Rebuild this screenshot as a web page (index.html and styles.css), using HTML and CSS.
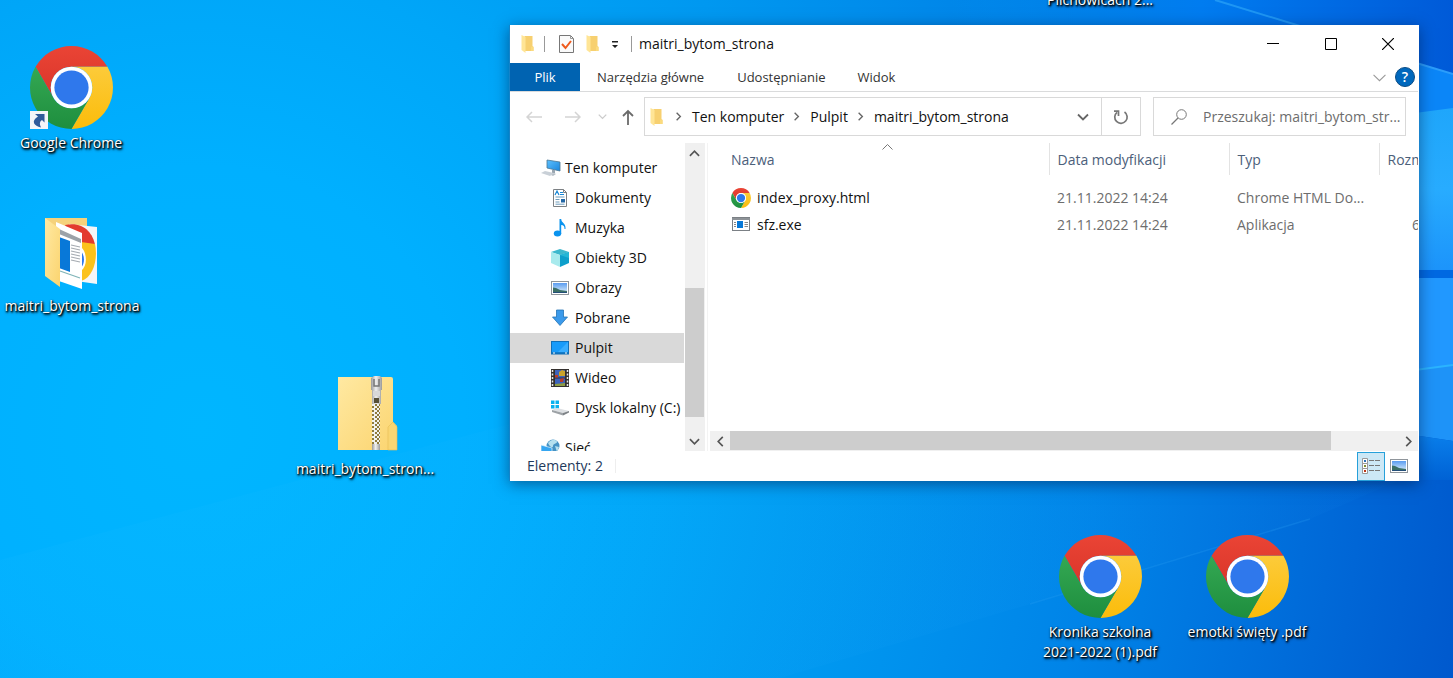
FILE: index.html
```html
<!DOCTYPE html>
<html lang="pl">
<head>
<meta charset="utf-8">
<title>Pulpit</title>
<link rel="stylesheet" href="styles.css">
</head>
<body>
<svg class="defs" width="0" height="0" aria-hidden="true">
  <defs>
    <linearGradient id="g-red" x1="0" y1="0" x2="0" y2="1"><stop offset="0" stop-color="#ea4435"/><stop offset="1" stop-color="#d9352a"/></linearGradient>
    <linearGradient id="g-yel" x1="0" y1="0" x2="0" y2="1"><stop offset="0" stop-color="#fccb3a"/><stop offset="1" stop-color="#fbbc0a"/></linearGradient>
    <linearGradient id="g-grn" x1="0" y1="0" x2="0" y2="1"><stop offset="0" stop-color="#34a853"/><stop offset="1" stop-color="#1e8e3e"/></linearGradient>
    <linearGradient id="g-fold" x1="0" y1="0" x2="1" y2="1"><stop offset="0" stop-color="#ffe9a2"/><stop offset="1" stop-color="#fbd46f"/></linearGradient>
    <linearGradient id="g-metal" x1="0" y1="0" x2="1" y2="0"><stop offset="0" stop-color="#999"/><stop offset=".45" stop-color="#f0f0f0"/><stop offset="1" stop-color="#9a9a9a"/></linearGradient>
    <linearGradient id="g-sky" x1="0" y1="0" x2="0" y2="1"><stop offset="0" stop-color="#5a9cf0"/><stop offset="1" stop-color="#dff0fb"/></linearGradient>
    <linearGradient id="g-screen" x1="0" y1="0" x2="1" y2="1"><stop offset="0" stop-color="#5cc0ff"/><stop offset="1" stop-color="#1b86dc"/></linearGradient>
    <pattern id="zip-teeth" width="8" height="4" patternUnits="userSpaceOnUse"><rect width="8" height="4" fill="#8e7a3c"/><path d="M0 0h3v2H0zM5 0h2v2H5zM2 2h3v2H2zM7 2h1v2H7z" fill="#f1f1ee"/></pattern>
    <symbol id="chrome" viewBox="0 0 48 48">
      <path fill="url(#g-red)" d="M3.22 12A24 24 0 0 1 44.78 12H24A12 12 0 0 0 13.61 30Z"/>
      <path fill="url(#g-yel)" d="M44.78 12A24 24 0 0 1 24 48L34.39 30A12 12 0 0 0 24 12Z"/>
      <path fill="url(#g-grn)" d="M24 48A24 24 0 0 1 3.22 12L13.61 30A12 12 0 0 0 34.39 30Z"/>
      <circle cx="24" cy="24" r="12" fill="#fff"/><circle cx="24" cy="24" r="9.9" fill="#2f78ec"/>
    </symbol>
    <symbol id="folder" viewBox="0 0 12 18">
      <path fill="#f7d070" d="M3 1h8v10l1 1v4H3z"/><path fill="#ffe596" d="M0 0l4 2v16l-4-3z"/><path fill="#fbdb7e" d="M9.500 16v-4l1.500-1 1 1v4z"/>
    </symbol>
    <symbol id="picture" viewBox="0 0 18 14">
      <rect x=".5" y=".5" width="17" height="13" fill="#fff" stroke="#8f959b"/><rect x="2" y="2" width="14" height="10" fill="url(#g-sky)"/>
      <path fill="#3b6f66" d="M2 6.500l3 .5 4 2 7 1v2H2z"/><path fill="#234e78" d="M2 11h14v1H2z"/>
    </symbol>
    <symbol id="chev-down" viewBox="0 0 12 12"><path d="M1 3.500l5 5 5-5" fill="none" stroke="currentColor" stroke-width="1.800"/></symbol>
    <symbol id="chev-up" viewBox="0 0 12 12"><path d="M1 8.500l5-5 5 5" fill="none" stroke="currentColor" stroke-width="1.800"/></symbol>
    <symbol id="chev-left" viewBox="0 0 12 12"><path d="M8.500 1l-5 5 5 5" fill="none" stroke="currentColor" stroke-width="1.800"/></symbol>
    <symbol id="chev-right" viewBox="0 0 12 12"><path d="M3.500 1l5 5-5 5" fill="none" stroke="currentColor" stroke-width="1.800"/></symbol>
  </defs>
</svg>

<main class="desktop">
  <svg class="wallpaper" viewBox="0 0 1453 678" preserveAspectRatio="none" aria-hidden="true">
    <defs>
      <radialGradient id="w-base" gradientUnits="userSpaceOnUse" cx="200" cy="430" r="1320">
        <stop offset="0" stop-color="#00b6ff"/><stop offset=".2" stop-color="#00b0ff"/><stop offset=".35" stop-color="#00a6f8"/><stop offset=".5" stop-color="#0098f0"/><stop offset=".68" stop-color="#0084e8"/><stop offset=".84" stop-color="#006cda"/><stop offset="1" stop-color="#0054ca"/>
      </radialGradient>
      <linearGradient id="w-top" gradientUnits="userSpaceOnUse" x1="950" y1="0" x2="1453" y2="0"><stop offset="0" stop-color="#0093f2" stop-opacity="0"/><stop offset=".5" stop-color="#007cf0"/><stop offset="1" stop-color="#005ad8"/></linearGradient>
      <linearGradient id="w-beam" x1="0" y1="0" x2="0" y2="1"><stop offset="0" stop-color="#1fa6fb"/><stop offset=".5" stop-color="#28acff"/><stop offset="1" stop-color="#1c94fb"/></linearGradient>
      <linearGradient id="w-low" x1="0" y1="0" x2="0" y2="1"><stop offset="0" stop-color="#0a80ec"/><stop offset="1" stop-color="#0062d5"/></linearGradient>
      <linearGradient id="w-ray" x1="0" y1="0" x2="1" y2="0"><stop offset="0" stop-color="#5cd0ff" stop-opacity=".1"/><stop offset="1" stop-color="#2ba4ff" stop-opacity=".1"/></linearGradient>
    </defs>
    <rect width="1453" height="678" fill="url(#w-base)"/>
    <path d="M900 0H1453V80L1290 30H900z" fill="url(#w-top)"/>
    <path d="M1215 0L1300 26" stroke="#2ba4f8" stroke-width="2" opacity=".7"/>
    <path d="M1400 58L1453 74V110L1400 116z" fill="#0b86f8"/>
    <path d="M1400 58L1453 74" stroke="#2b9dfb" stroke-width="2"/>
    <path d="M1400 115L1453 108V270H1400z" fill="url(#w-beam)"/>
    <path d="M1400 270H1453V278H1400z" fill="#0069e2"/>
    <path d="M1400 278H1453V366L1400 372z" fill="#2198ff"/>
    <path d="M1400 372L1453 365V441L1400 433z" fill="#1e93f8"/>
    <path d="M1400 372L1453 365" stroke="#2bb4ff" stroke-width="2"/>
    <path d="M1400 433L1453 441V480L1400 480z" fill="url(#w-low)"/>
    <path d="M0 560L600 400H1400V480L1310 519L1030 604L780 678H0z" fill="url(#w-ray)" opacity=".4"/>
    <path d="M1030 604L1310 519" stroke="#2aa0f5" stroke-width="1.500" fill="none" opacity=".25"/>
  </svg>

  <a class="shortcut at-chrome" href="#">
    <span class="art"><svg width="83" height="83"><use href="#chrome"/></svg>
      <svg class="link-badge" width="18" height="18" viewBox="0 0 18 18"><rect width="18" height="18" fill="#f3f5f8"/><path d="M5 3h9.500v8.500L12 9c-2.500 1.500-2.800 4-1 7.500C4 15 .5 10 8 5.500z" fill="#2f5b9b"/></svg></span>
    <span class="caption">Google Chrome</span>
  </a>
  <a class="shortcut at-folder" href="#">
    <span class="art"><svg width="83" height="83" viewBox="0 0 83 83">
      <path d="M14 9h42v58H14z" fill="#f5d27c"/>
      <path d="M38 15l28 3v57l-28-4z" fill="#f3f5f8"/>
      <path d="M34 16c18-4 28 8 30 20l-5 0-15-3z" fill="#e33b2e"/>
      <path d="M50 33l14 2c3 14-1 33-14 37z" fill="#fbc21c"/>
      <path d="M50 38c6 5 7 19 0 24z" fill="#fff"/><path d="M50 42c4 5 4 12 0 17z" fill="#2f78ec"/>
      <path d="M25 13l26 11v56l-26-9z" fill="#fff"/><path d="M28 20l22 10v4l-22-9z" fill="#9ca2a8"/>
      <path d="M28 28l11 4v31l-11-4z" fill="#0878d8"/>
      <path d="M40 36l9 2M40 39l9 2M40 42l9 2M40 45l9 2M40 48l9 2M40 51l9 2" stroke="#a5abb1" stroke-width="1.200"/>
      <path d="M29 62l20 7" stroke="#7fb4b8" stroke-width="1.200"/>
      <path d="M14 9l15 11v58L14 67z" fill="url(#g-fold)"/>
    </svg></span>
    <span class="caption">maitri_bytom_strona</span>
  </a>
  <a class="shortcut at-zip" href="#">
    <span class="art"><svg width="83" height="83" viewBox="0 0 83 83">
      <path d="M14 5h53q2 0 2 2v43l4 4v24H14z" fill="url(#g-fold)"/><path d="M64 78V55l5-5 4 5v23z" fill="#f9d673" stroke="#e6bd55" stroke-width=".6"/>
      <rect x="48" y="32" width="8" height="40" fill="url(#zip-teeth)"/>
      <path d="M48 72h8v6h-8z" fill="url(#g-metal)"/>
      <path d="M47 6l3-2h6l2 2v12h-1v14h-9V18h-1z" fill="url(#g-metal)"/><path d="M50 7v7h5V7" fill="none" stroke="#777" stroke-width="1.500"/><rect x="50" y="26" width="5" height="5" fill="#564f37"/><path d="M49 19h7v5h-7z" fill="#d8d8d8"/>
    </svg></span>
    <span class="caption">maitri_bytom_stron...</span>
  </a>
  <a class="shortcut at-kronika" href="#">
    <span class="art"><svg width="83" height="83"><use href="#chrome"/></svg></span>
    <span class="caption">Kronika szkolna<br>2021-2022 (1).pdf</span>
  </a>
  <a class="shortcut at-emotki" href="#">
    <span class="art"><svg width="83" height="83"><use href="#chrome"/></svg></span>
    <span class="caption">emotki święty .pdf</span>
  </a>
  <a class="shortcut at-top" href="#"><span class="caption">Pilchowicach 2...</span></a>

  <section class="window" aria-label="maitri_bytom_strona">
    <header class="titlebar">
      <svg width="13" height="18"><use href="#folder"/></svg>
      <span class="rule first"></span>
      <button class="plain" aria-label="Właściwości"><svg width="15" height="18" viewBox="0 0 15 18"><path d="M.5.500h11l3 3v14H.5z" fill="#fafafa" stroke="#777"/><path d="M11.500.500v3h3" fill="none" stroke="#999"/><path d="M3 9l3.500 4L12 6" fill="none" stroke="#ee5a1c" stroke-width="2"/></svg></button>
      <button class="plain" aria-label="Nowy folder"><svg width="13" height="18"><use href="#folder"/></svg></button>
      <button class="plain" aria-label="Dostosuj"><svg width="8" height="10" viewBox="0 0 8 10"><path d="M1 2h6v1.500H1zM1 6h6L4 9z" fill="#222"/></svg></button>
      <span class="rule last"></span>
      <h1 class="title">maitri_bytom_strona</h1>
      <button class="control" aria-label="Minimalizuj"><svg width="12" height="12"><path d="M0 5.500h12" stroke="#000"/></svg></button>
      <button class="control" aria-label="Maksymalizuj"><svg width="12" height="12"><path d="M.5.500h11v11H.5z" fill="none" stroke="#000"/></svg></button>
      <button class="control" aria-label="Zamknij"><svg width="12" height="12"><path d="M0 0l12 12M12 0L0 12" stroke="#000" stroke-width="1.200"/></svg></button>
    </header>

    <nav class="tabs">
      <button class="tab file">Plik</button>
      <button class="tab">Narzędzia główne</button>
      <button class="tab">Udostępnianie</button>
      <button class="tab">Widok</button>
      <button class="plain expand" aria-label="Rozwiń wstążkę"><svg width="13" height="13" viewBox="0 0 12 12"><path d="M.5 3.500L6 9l5.500-5.500" fill="none" stroke="#999"/></svg></button>
      <button class="help" aria-label="Pomoc">?</button>
    </nav>

    <div class="toolbar">
      <button class="plain" aria-label="Wstecz"><svg width="16" height="12"><path d="M16 6H1M6 1L1 6l5 5" fill="none" stroke="#d4d4d4" stroke-width="1.500"/></svg></button>
      <button class="plain" aria-label="Dalej"><svg width="16" height="12"><path d="M0 6h15M10 1l5 5-5 5" fill="none" stroke="#d4d4d4" stroke-width="1.500"/></svg></button>
      <button class="plain recent" aria-label="Ostatnie"><svg width="9" height="9"><use href="#chev-down"/></svg></button>
      <button class="plain up" aria-label="W górę"><svg width="12" height="16"><path d="M6 16V2M1 7l5-5 5 5" fill="none" stroke="#6b6b6b" stroke-width="1.800"/></svg></button>
      <div class="address">
        <svg class="address-icon" width="13" height="18"><use href="#folder"/></svg>
        <svg class="sep" width="9" height="9"><use href="#chev-right"/></svg>
        <button class="plain crumb">Ten komputer</button>
        <svg class="sep" width="9" height="9"><use href="#chev-right"/></svg>
        <button class="plain crumb">Pulpit</button>
        <svg class="sep" width="9" height="9"><use href="#chev-right"/></svg>
        <button class="plain crumb">maitri_bytom_strona</button>
        <button class="plain drop" aria-label="Poprzednie lokalizacje"><svg width="12" height="12"><use href="#chev-down"/></svg></button>
        <button class="plain refresh" aria-label="Odśwież"><svg width="16" height="16" viewBox="0 0 16 16"><path d="M11.500 3A6.200 6.200 0 1 1 4 3.300M1 2.200h4.500V7" fill="none" stroke="#777" stroke-width="1.700"/></svg></button>
      </div>
      <label class="search">
        <svg width="16" height="16" viewBox="0 0 16 16"><circle cx="10.500" cy="5.500" r="4.800" fill="none" stroke="#777"/><path d="M7 9l-6.500 6.500" stroke="#777" stroke-width="1.200"/></svg>
        <input type="text" aria-label="Przeszukaj" placeholder="Przeszukaj: maitri_bytom_str...">
      </label>
    </div>

    <div class="body">
      <nav class="tree">
        <a class="node root" href="#"><svg width="20" height="18" viewBox="0 0 20 18"><path d="M6 1l13 2v9L6 9z" fill="url(#g-screen)" stroke="#4a7590" stroke-width=".8"/><path d="M11 11h3v3h-3z" fill="#9aa6b0"/><path d="M0 14l4-2 9 2-4 3z" fill="#c9d0d7"/><path d="M10 16l3-2 2 1-3 2z" fill="#b5bec6"/></svg>Ten komputer</a>
        <a class="node" href="#"><svg width="18" height="18" viewBox="0 0 18 18"><path d="M2.500.500h10l3 3v14h-13z" fill="#fff" stroke="#7c8083"/><path d="M12.500.500v3h3" fill="none" stroke="#7c8083"/><path d="M4 6l2-4 2 4M9 3.500h3M9 5.500h4" fill="none" stroke="#1787d6" stroke-width="1.200"/><path d="M4.500 8h9M4.500 10.500h4M4.500 13h4M4.500 15.200h9" stroke="#6d9cbb"/><rect x="10" y="10" width="4" height="3.500" fill="#2267a5"/></svg>Dokumenty</a>
        <a class="node" href="#"><svg width="18" height="18" viewBox="0 0 18 18"><ellipse cx="6.500" cy="14.500" rx="3.700" ry="3" fill="#0a93ee"/><path d="M8.500 0h1.700c0 4 5 4 4.300 10h-1c0-3-1-4-3.300-4v9H8.500z" fill="#0a93ee"/></svg>Muzyka</a>
        <a class="node" href="#"><svg width="18" height="18" viewBox="0 0 18 18"><path d="M0 3l9-3 9 3-9 3z" fill="#3db8cd"/><path d="M0 3l9 3v12l-9-4z" fill="#a8eaed"/><path d="M18 3L9 6v12l9-4z" fill="#0e9fcb"/><path d="M9 6l9-3v6z" fill="#25b6d5"/></svg>Obiekty 3D</a>
        <a class="node" href="#"><svg width="18" height="14"><use href="#picture"/></svg>Obrazy</a>
        <a class="node" href="#"><svg width="18" height="18" viewBox="0 0 18 18"><path d="M5.500 1h7v7h4L9 16.500 1.500 8h4z" fill="#3b9aeb" stroke="#2374b5" stroke-width=".8"/></svg>Pobrane</a>
        <a class="node selected" href="#" aria-current="true"><svg width="18" height="14" viewBox="0 0 18 14"><rect x=".5" y=".5" width="17" height="12.500" fill="#189bfa" stroke="#1270b8"/><path d="M17 1v10H7z" fill="#38adff"/><path d="M1 12h16" stroke="#0b5d9e"/><path d="M2 12h2M14 12h2" stroke="#fff"/></svg>Pulpit</a>
        <a class="node" href="#"><svg width="18" height="18" viewBox="0 0 18 18"><path d="M0 0h18v18H0z" fill="#33302e"/><path d="M1.500 1v17M16.500 1v17" stroke="#e8e8e8" stroke-width="1.500" stroke-dasharray="2 1.500"/><path d="M4 1h10v7.500H4zM4 9.500h10V17H4z" fill="#3c63bb"/><path d="M8 3l3-2 3 1v5H8z" fill="#c9a32b"/><path d="M4 6h3v2.500H4zM9 10l4-1-1 4H9z" fill="#bd3a26"/><path d="M4 15l10-1v3H4z" fill="#8d9c44"/></svg>Wideo</a>
        <a class="node" href="#"><svg width="18" height="18" viewBox="0 0 18 18"><path d="M0 1.500h3.500V5H0zM4.500 1.500H8V5H4.500zM0 6h3.500v3.500H0zM4.500 6H8v3.500H4.500z" fill="#09b2ef"/><path d="M1 11l5-2 12 3-6 2z" fill="#dde0e3"/><path d="M1 11l11 3v2.500L1 13z" fill="#9da2a6"/><path d="M18 12l-6 2v2.500l6-3z" fill="#7d8286"/></svg>Dysk lokalny (C:)</a>
        <a class="node root network" href="#"><svg width="20" height="18" viewBox="0 0 20 18"><circle cx="12" cy="7" r="6.500" fill="#4592c4"/><path d="M7 4c4-5 9-3 9-1s-4 1-4 4-4 0-5-3zM14 7l4 1-2 5z" fill="#b5e0ef"/><path d="M0 6l11 3v9L0 15z" fill="#35a6f1" stroke="#e7f5fc" stroke-width=".7"/></svg>Sieć</a>
      </nav>
      <div class="vscroll">
        <button class="plain arrow" aria-label="Przewiń w górę"><svg width="11" height="11"><use href="#chev-up"/></svg></button>
        <div class="track"><div class="thumb"></div></div>
        <button class="plain arrow" aria-label="Przewiń w dół"><svg width="11" height="11"><use href="#chev-down"/></svg></button>
      </div>
      <div class="content">
        <div class="listing">
          <table class="files">
            <colgroup><col class="c-name"><col class="c-date"><col class="c-type"><col class="c-size"></colgroup>
            <thead><tr><th>Nazwa<svg class="sorted" width="11" height="6"><path d="M.5 5.500l5-5 5 5" fill="none" stroke="#777"/></svg></th><th>Data modyfikacji</th><th>Typ</th><th>Rozmiar</th></tr></thead>
            <tbody>
              <tr><td><span class="entry"><svg width="20" height="20"><use href="#chrome"/></svg>index_proxy.html</span></td><td>21.11.2022 14:24</td><td>Chrome HTML Do...</td><td></td></tr>
              <tr><td><span class="entry"><svg width="20" height="20" viewBox="0 0 20 20"><rect x="1.500" y="2.500" width="17" height="13" fill="#fff" stroke="#7b8085"/><path d="M1 4h18" stroke="#8d9297" stroke-width="2"/><rect x="6" y="6" width="6" height="7" fill="#0878d7"/><path d="M3 7.500h2M3 9.500h2M3 11.500h2M13.500 7.500H17M13.500 9.500H17M13.500 11.500H17" stroke="#888"/></svg>sfz.exe</span></td><td>21.11.2022 14:24</td><td>Aplikacja</td><td class="size">6 KB</td></tr>
            </tbody>
          </table>
        </div>
        <div class="hscroll">
          <button class="plain arrow" aria-label="Przewiń w lewo"><svg width="11" height="11"><use href="#chev-left"/></svg></button>
          <div class="track"><div class="thumb"></div></div>
          <button class="plain arrow" aria-label="Przewiń w prawo"><svg width="11" height="11"><use href="#chev-right"/></svg></button>
        </div>
      </div>
    </div>

    <footer class="status">
      <span class="count">Elementy: 2</span>
      <button class="view active" aria-label="Szczegóły"><svg width="19" height="16" viewBox="0 0 19 16"><path d="M.5.500h5v5h-5zM.5 5.500h5v5h-5zM.5 10.500h5v5h-5z" fill="#fff" stroke="#999"/><path d="M2 2h2v2H2z" fill="#2d73b5"/><path d="M2 7h2v2H2z" fill="#7f8e2f"/><path d="M2 12h2v2H2z" fill="#bd3718"/><path d="M7 2.500h5M13 2.500h5M7 7.500h5M13 7.500h5M7 12.500h5M13 12.500h5" stroke="#777"/></svg></button>
      <button class="view" aria-label="Duże ikony"><svg width="18" height="14"><use href="#picture"/></svg></button>
    </footer>
  </section>
</main>
</body>
</html>
```

FILE: styles.css
```css
* { box-sizing: border-box; }
body { margin: 0; font: 14px/20px "Open Sans", "Noto Sans", sans-serif; color: #111; }
svg { display: block; flex: none; }
a { color: inherit; text-decoration: none; }
.defs { position: absolute; }
.desktop { position: relative; min-height: 100vh; overflow: hidden; background: #00a8f8; }
.wallpaper { position: absolute; inset: 0; width: 100%; height: 100%; }

.shortcut { position: absolute; width: 146px; display: flex; flex-direction: column; align-items: center; gap: 4px; color: #fff; text-align: center; text-shadow: 1px 1px 2px #000, 1px 1px 2px #000, 1px 2px 3px rgba(0, 0, 0, .7); }
.art { position: relative; }
.link-badge { position: absolute; left: 0; bottom: 0; }
.caption { white-space: nowrap; }
.at-chrome { left: -2px; top: 46px; }
.at-folder { left: -1px; top: 209px; }
.at-zip { left: 292px; top: 372px; }
.at-kronika { left: 1027px; top: 535px; }
.at-emotki { left: 1174px; top: 535px; }
.at-top { left: 1027px; top: -10px; }

.plain { display: flex; align-items: center; justify-content: center; border: 0; padding: 0; background: none; font: inherit; color: inherit; }
.window { position: absolute; inset: 25px 34px 197px 509px; display: flex; flex-direction: column; padding-right: 1px; background: #fff; border-left: 1px solid #1583c8; box-shadow: 0 3px 14px rgba(0, 20, 60, .5); }

.titlebar { display: flex; align-items: center; height: 38px; padding-left: 11px; gap: 12px; }
.rule { width: 1px; height: 16px; background: #999; }
.rule.first { margin-left: -2px; margin-right: 2px; }
.titlebar .title { flex: 1; margin: 0 0 0 -5px; font-size: 14px; font-weight: 400; }
.control { display: flex; align-items: center; justify-content: center; width: 58px; height: 38px; border: 0; padding: 0; margin-left: -12px; background: none; }
.title + .control { margin-left: 0; }
.control:last-child { padding-right: 2px; }

.tabs { display: flex; align-items: stretch; height: 29px; padding-right: 3px; border-bottom: 1px solid #dadbdc; }
.tab { border: 0; padding: 0 17px; background: none; font: 13px/28px "Open Sans", "Noto Sans", sans-serif; color: #333; }
.tab + .tab + .tab { padding: 0 16px; }
.tab.file { width: 70px; background: #0063b1; color: #fff; }
.expand { margin-left: auto; }
.help { align-self: center; width: 20px; height: 20px; margin-left: 9px; border: 1px solid #0a4c85; border-radius: 50%; padding: 0; background: #0068bd; color: #fff; font: 600 14px/18px "Open Sans", sans-serif; }

.toolbar { display: flex; align-items: center; padding: 5px 12px 7px 16px; }
.toolbar > .plain { margin-right: 23px; }
.toolbar > .recent { margin: 0 15px 0 -6px; color: #ccc; }
.toolbar > .up { margin-right: 10px; }
.address { flex: 1; min-width: 0; display: flex; align-items: center; height: 39px; border: 1px solid #d9d9d9; }
.address-icon { margin: 0 8px 0 5px; }
.sep { margin: 0 9px 0 8px; color: #666; }
.address-icon + .sep { margin-left: 3px; margin-right: 9px; }
.drop { width: 36px; margin-left: auto; color: #666; }
.refresh { width: 39px; height: 37px; border-left: 1px solid #d9d9d9; }
.search { display: flex; align-items: center; gap: 16px; width: 253px; height: 39px; margin-left: 12px; padding-left: 17px; border: 1px solid #d9d9d9; }
.search input { flex: 1; min-width: 0; border: 0; padding: 0; outline: 0; background: none; font: inherit; color: #666; }
.search input::placeholder { color: #6d6d6d; opacity: 1; }

.body { flex: 1; min-height: 0; display: flex; }
.tree { width: 174px; padding-top: 10px; overflow: hidden; }
.node { display: flex; align-items: center; gap: 6px; height: 30px; padding-left: 41px; white-space: nowrap; }
.node.root { padding-left: 31px; gap: 4px; }
.node.network { margin-top: 10px; }
.node.selected { background: #d9d9d9; }
.vscroll { display: flex; flex-direction: column; width: 20px; margin-left: 1px; background: #f0f0f0; color: #555; }
.arrow { width: 20px; height: 20px; }
.vscroll .arrow { width: 19px; }
.track { flex: 1; display: flex; }
.vscroll .track { flex-direction: column; }
.vscroll .thumb { height: 48%; margin: auto 1px 14px 0; background: #cdcdcd; }
.content { flex: 1; min-width: 0; display: flex; flex-direction: column; margin-left: 2px; border-left: 1px solid #f3f3f3; padding-left: 1px; }
.listing { flex: 1; overflow: hidden; }
.files { width: 770px; border-collapse: collapse; table-layout: fixed; color: #6d6d6d; }
.c-name { width: 340px; }
.c-date { width: 180px; }
.c-type { width: 150px; }
.files th { position: relative; height: 32px; padding: 2px 8px 0; border-right: 1px solid #e3e3e3; font-weight: 400; text-align: left; color: #4c607a; }
.files td { height: 27px; padding: 0 8px; white-space: nowrap; }
.files th:first-child, .files td:first-child { padding-left: 22px; }
.files tbody::before { content: ""; display: block; height: 9px; }
.files td.size { padding-left: 33px; }
.sorted { position: absolute; left: 51%; top: 1px; }
.entry { display: flex; align-items: center; gap: 6px; color: #111; }
.hscroll { display: flex; height: 20px; margin-left: 1px; background: #f0f0f0; color: #555; }
.hscroll .thumb { width: 90%; height: 19px; background: #cdcdcd; }

.status { display: flex; align-items: center; height: 30px; padding: 0 5px 0 17px; color: #1e395b; }
.count { margin-right: auto; padding-right: 12px; border-right: 1px solid #eee; line-height: 14px; }
.view { display: flex; align-items: center; justify-content: center; width: 28px; height: 29px; border: 1px solid transparent; padding: 0; background: none; }
.view.active { background: #cce8f6; border-color: #26a0da; }
```
